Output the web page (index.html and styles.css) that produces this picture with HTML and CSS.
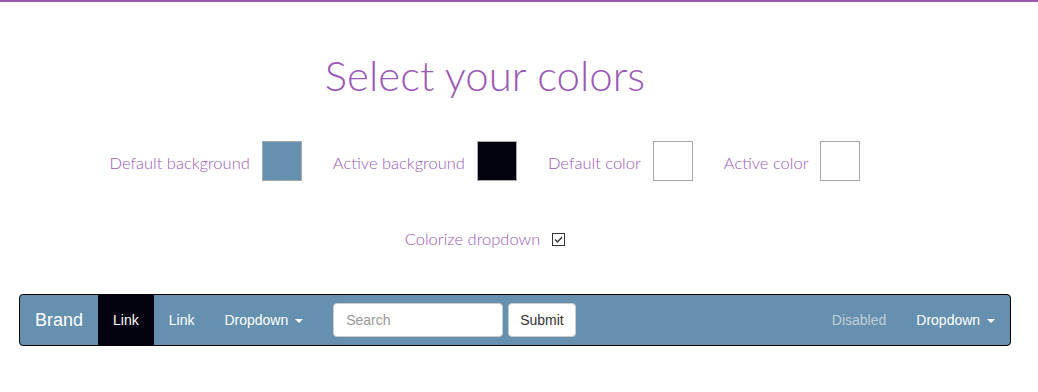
FILE: index.html
```html
<!DOCTYPE html>
<html lang="en">

<head>
    <meta charset="UTF-8">
    <meta name="viewport" content="width=device-width, initial-scale=1.0">
    <title>Select your colors</title>
    <link rel="stylesheet" href="styles.css">
</head>

<body>
    <div class="picker">
        <h1 class="title">Select your colors</h1>
        <div class="swatches">
            <label class="pick"><span class="pick-text">Default background</span> <span class="swatch sw-default-bg"></span></label>
            <label class="pick"><span class="pick-text">Active background</span> <span class="swatch sw-active-bg"></span></label>
            <label class="pick"><span class="pick-text">Default color</span> <span class="swatch sw-white"></span></label>
            <label class="pick"><span class="pick-text">Active color</span> <span class="swatch sw-white"></span></label>
        </div>
        <label class="colorize">Colorize dropdown
            <span class="check">
                <svg width="13" height="13" viewBox="0 0 13 13">
                    <rect x="0.5" y="0.5" width="12" height="12" fill="#fff" stroke="#333"/>
                    <path d="M3 6.5 L5.5 9 L10 4" fill="none" stroke="#333" stroke-width="1.3"/>
                </svg>
            </span>
        </label>
    </div>

    <nav class="navbar">
        <a class="brand" href="#">Brand</a>
        <ul class="nav">
            <li><a class="active" href="#">Link</a></li>
            <li><a href="#">Link</a></li>
            <li><a href="#">Dropdown <span class="caret"></span></a></li>
        </ul>
        <form class="nav-form">
            <input type="text" class="search" placeholder="Search">
            <button type="button" class="submit">Submit</button>
        </form>
        <ul class="nav nav-right">
            <li><a class="disabled" href="#">Disabled</a></li>
            <li><a href="#">Dropdown <span class="caret"></span></a></li>
        </ul>
    </nav>
</body>

</html>
```

FILE: styles.css
```css
body {
    margin: 0px;
    padding: 0px;
    border-top: 2px solid #9b59b6;
    font-family: "Liberation Sans", Arial, sans-serif;
    background: #fff;
}

.picker {
    padding-right: 68px;
    text-align: center;
    color: #9b59b6;
    font-family: Lato, "Open Sans", sans-serif;
    font-weight: 300;
}

.title {
    margin: 0px;
    padding-top: 46px;
    font-size: 42px;
    font-weight: 300;
    line-height: 54px;
}

.swatches {
    display: flex;
    justify-content: center;
    gap: 31px;
    margin-top: 39px;
}

.pick {
    display: flex;
    align-items: center;
    gap: 12px;
    font-size: 16.5px;
}

.pick-text {
    padding-top: 3px;
}

.swatch {
    display: inline-block;
    width: 38px;
    height: 38px;
    border: 1px solid #a9a9a9;
}

.sw-default-bg {
    background: #6690b0;
}

.sw-active-bg {
    background: #02030e;
}

.sw-white {
    background: #fff;
}

.colorize {
    display: inline-flex;
    align-items: center;
    gap: 12px;
    margin-top: 48px;
    font-size: 16.5px;
}

.check {
    display: block;
    width: 13px;
    height: 13px;
}

.check svg {
    display: block;
}

.navbar {
    display: flex;
    align-items: flex-start;
    margin: 45px 27px 0px 19px;
    height: 50px;
    background: #6690b0;
    border: 1px solid #000;
    border-radius: 4px;
    font-size: 14px;
}

.brand {
    padding: 15px;
    font-size: 18px;
    line-height: 20px;
    color: #fff;
    text-decoration: none;
}

.nav {
    display: flex;
    margin: 0px;
    padding: 0px;
    list-style: none;
}

.nav a {
    display: block;
    padding: 15px;
    line-height: 20px;
    color: #fff;
    text-decoration: none;
}

.nav a.active {
    background: #02030e;
}

.nav a.disabled {
    color: #c2cdd6;
}

.nav-right {
    margin-left: auto;
}

.caret {
    display: inline-block;
    width: 0px;
    height: 0px;
    margin-left: 3px;
    vertical-align: middle;
    border-top: 4px solid #fff;
    border-left: 4px solid transparent;
    border-right: 4px solid transparent;
}

.nav-form {
    display: flex;
    gap: 5px;
    padding: 8px 15px;
}

.search {
    box-sizing: border-box;
    width: 170px;
    height: 34px;
    padding: 6px 12px;
    border: 1px solid #ccc;
    border-radius: 4px;
    font-family: "Liberation Sans", Arial, sans-serif;
    font-size: 14px;
    color: #555;
}

.search::placeholder {
    color: #999;
}

.submit {
    box-sizing: border-box;
    height: 34px;
    padding: 6px 11px;
    background: #fff;
    border: 1px solid #ccc;
    border-radius: 4px;
    font-family: "Liberation Sans", Arial, sans-serif;
    font-size: 14px;
    color: #333;
}
```
